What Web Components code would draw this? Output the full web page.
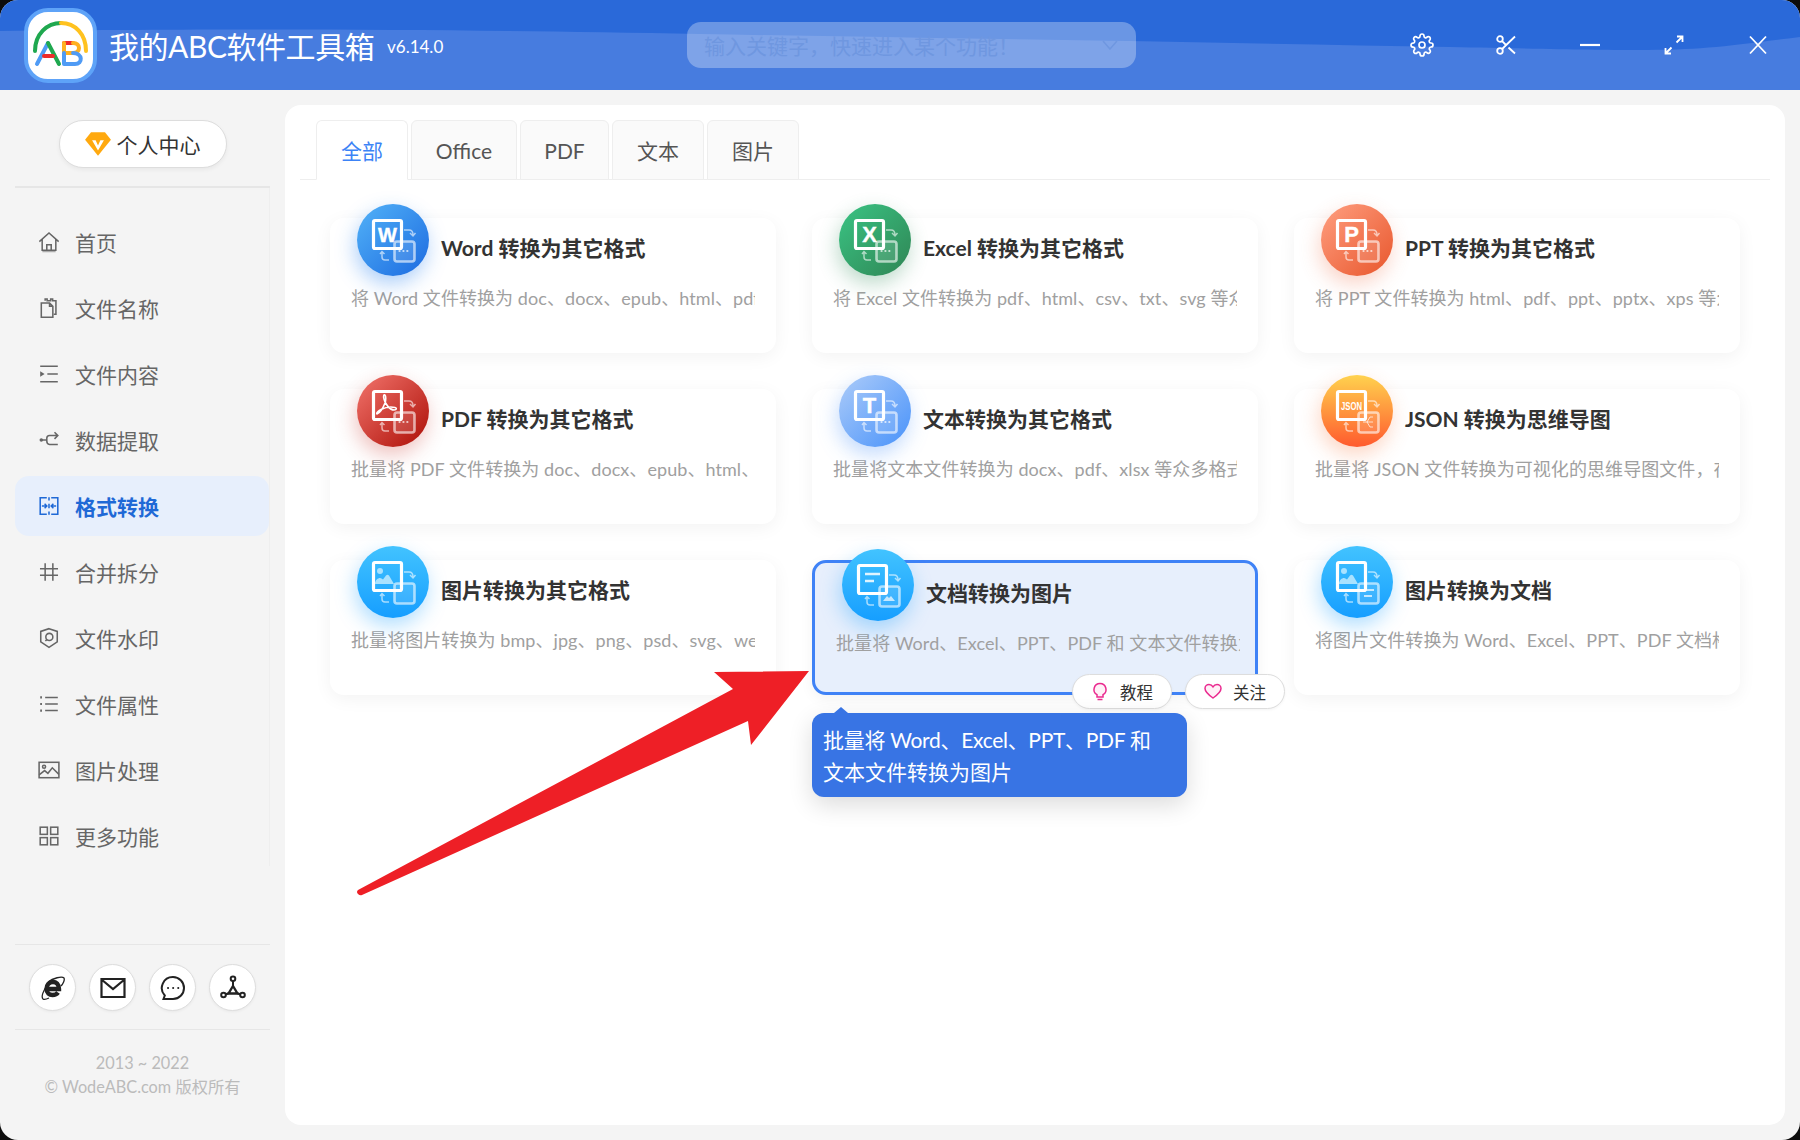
<!DOCTYPE html>
<html lang="zh">
<head>
<meta charset="utf-8">
<title>我的ABC软件工具箱</title>
<style>
  html, body { margin: 0; padding: 0; background: #0c0c0c; }
  body { font-family: Lato, "Noto Sans CJK SC", sans-serif; width: 1800px; height: 1140px; overflow: hidden; }
</style>
</head>
<body>

<abc-app>
  <app-header slot="header"></app-header>
  <side-bar slot="side">
    <nav-item icon="home">首页</nav-item>
    <nav-item icon="files">文件名称</nav-item>
    <nav-item icon="content">文件内容</nav-item>
    <nav-item icon="extract">数据提取</nav-item>
    <nav-item icon="format" active>格式转换</nav-item>
    <nav-item icon="hash">合并拆分</nav-item>
    <nav-item icon="shield">文件水印</nav-item>
    <nav-item icon="list">文件属性</nav-item>
    <nav-item icon="image">图片处理</nav-item>
    <nav-item icon="more">更多功能</nav-item>
  </side-bar>
  <main-panel slot="main">
    <tab-item slot="tabs" w="92" active>全部</tab-item>
    <tab-item slot="tabs" w="106">Office</tab-item>
    <tab-item slot="tabs" w="89">PDF</tab-item>
    <tab-item slot="tabs" w="92">文本</tab-item>
    <tab-item slot="tabs" w="92">图片</tab-item>

    <tool-card kind="word" from="#52b2f8" to="#1c6ae0" glow="rgba(40,130,240,.38)">
      <span slot="title">Word 转换为其它格式</span>
      <span slot="desc">将 Word 文件转换为 doc、docx、epub、html、pdf</span>
    </tool-card>
    <tool-card kind="excel" from="#3ac484" to="#2f8554" glow="rgba(50,140,90,.32)">
      <span slot="title">Excel 转换为其它格式</span>
      <span slot="desc">将 Excel 文件转换为 pdf、html、csv、txt、svg 等众</span>
    </tool-card>
    <tool-card kind="ppt" from="#ff9f80" to="#e8562c" glow="rgba(240,110,70,.3)">
      <span slot="title">PPT 转换为其它格式</span>
      <span slot="desc">将 PPT 文件转换为 html、pdf、ppt、pptx、xps 等众</span>
    </tool-card>
    <tool-card kind="pdf" from="#f2746c" to="#ac0e06" glow="rgba(200,50,40,.3)">
      <span slot="title">PDF 转换为其它格式</span>
      <span slot="desc">批量将 PDF 文件转换为 doc、docx、epub、html、</span>
    </tool-card>
    <tool-card kind="text" from="#adccf9" to="#4892fa" glow="rgba(80,150,250,.35)">
      <span slot="title">文本转换为其它格式</span>
      <span slot="desc">批量将文本文件转换为 docx、pdf、xlsx 等众多格式</span>
    </tool-card>
    <tool-card kind="json" from="#ffd24e" to="#ff5a2e" glow="rgba(250,120,60,.3)" down>
      <span slot="title">JSON 转换为思维导图</span>
      <span slot="desc">批量将 JSON 文件转换为可视化的思维导图文件，在</span>
    </tool-card>
    <tool-card kind="img" from="#42c3ff" to="#169eff" glow="rgba(30,160,255,.35)" down>
      <span slot="title">图片转换为其它格式</span>
      <span slot="desc">批量将图片转换为 bmp、jpg、png、psd、svg、webp</span>
    </tool-card>
    <tool-card kind="doc" from="#42c3ff" to="#169eff" glow="rgba(30,160,255,.35)" down selected>
      <span slot="title">文档转换为图片</span>
      <span slot="desc">批量将 Word、Excel、PPT、PDF 和 文本文件转换为</span>
      <pill-btn slot="actions" icon="bulb">教程</pill-btn>
      <pill-btn slot="actions" icon="heart">关注</pill-btn>
      <tip-box slot="tip"><span style="letter-spacing:-.3px">批量将 Word、Excel、PPT、PDF 和</span><br>文本文件转换为图片</tip-box>
    </tool-card>
    <tool-card kind="imgdoc" from="#42c3ff" to="#169eff" glow="rgba(30,160,255,.35)" down>
      <span slot="title">图片转换为文档</span>
      <span slot="desc">将图片文件转换为 Word、Excel、PPT、PDF 文档格</span>
    </tool-card>
  </main-panel>
</abc-app>

<script>
'use strict';

const NAV_ICONS = {
  home: '<path d="M1.2 9.6 10 1.8l8.8 7.8M3.8 7.8v9.7h12.4V7.8M8 17.5v-5h4v5"/><path d="M4 18.6h12" opacity=".5"/>',
  files: '<path d="M6.5 3.5V1.8h1.8v1.7h3.2V1.8h1.8v1.7h3v12.2h-2"/><path d="M3 5.5h7.5l3 3v10H3zM10.5 5.5v3h3"/>',
  content: '<path d="M2 3h16M8.5 10H18M2 17h16"/><path d="M2 7.6 6 10l-4 2.4z" fill="currentColor" stroke="none"/>',
  extract: '<circle cx="3" cy="10" r="1.6" fill="currentColor" stroke="none"/><path d="M3 10h5M8 10V8.500c0-1.500 1-2.500 2.500-2.500H18M15 3l3 3-3 3M8 10v1c0 1.800 1 3 2.500 3H18"/>',
  format: '<path d="M8 2.500H2v15h6M12 2.500h6v15h-6M10 2v3M10 8v4M10 15v3M3.500 10H8M6 8l2 2-2 2M16.500 10H12M14 8l-2 2 2 2"/>',
  hash: '<path d="M6.500 2v16M13.500 2v16M1.800 7h16.400M1.800 13h16.400"/>',
  shield: '<path d="M10 1.500 17.500 4v9.500L10 18.500l-7.500-5V4z"/><circle cx="10.300" cy="9" r="3.200"/><path d="M8 11.500l-1.300 1.300"/>',
  list: '<path d="M6.500 4H18M6.500 10H18M6.500 16H18"/><path d="M2 4h1.600M2 10h1.600M2 16h1.600" stroke-width="2"/>',
  image: '<rect x="1" y="3" width="18" height="14"/><circle cx="5.500" cy="7" r="1.400"/><path d="M1 14.500l5-4 3 2.500 4-5 6 6"/>',
  more: '<rect x="2" y="2" width="6.500" height="6.500"/><rect x="11.500" y="2" width="6.500" height="6.500"/><rect x="2" y="11.500" width="6.500" height="6.500"/><rect x="11.500" y="11.500" width="6.500" height="6.500"/>'
};

const GEAR = 'M19.4 15a1.65 1.65 0 0 0 .33 1.82l.06.06a2 2 0 0 1 0 2.83 2 2 0 0 1-2.83 0l-.06-.06a1.65 1.65 0 0 0-1.82-.33 1.65 1.65 0 0 0-1 1.51V21a2 2 0 0 1-2 2 2 2 0 0 1-2-2v-.09A1.65 1.65 0 0 0 9 19.4a1.65 1.65 0 0 0-1.82.33l-.06.06a2 2 0 0 1-2.83 0 2 2 0 0 1 0-2.83l.06-.06a1.65 1.65 0 0 0 .33-1.82 1.65 1.65 0 0 0-1.51-1H3a2 2 0 0 1-2-2 2 2 0 0 1 2-2h.09A1.65 1.65 0 0 0 4.6 9a1.65 1.65 0 0 0-.33-1.82l-.06-.06a2 2 0 0 1 0-2.83 2 2 0 0 1 2.83 0l.06.06a1.65 1.65 0 0 0 1.82.33H9a1.65 1.65 0 0 0 1-1.51V3a2 2 0 0 1 2-2 2 2 0 0 1 2 2v.09a1.65 1.65 0 0 0 1 1.51 1.65 1.65 0 0 0 1.82-.33l.06-.06a2 2 0 0 1 2.83 0 2 2 0 0 1 0 2.83l-.06.06a1.65 1.65 0 0 0-.33 1.82V9a1.65 1.65 0 0 0 1.51 1H21a2 2 0 0 1 2 2 2 2 0 0 1-2 2h-.09a1.65 1.65 0 0 0-1.51 1z';

class AbcApp extends HTMLElement {
  constructor() {
    super();
    this.attachShadow({ mode: 'open' }).innerHTML = `
      <style>
        :host { display: grid; grid-template-columns: 285px 1fr; grid-template-rows: 90px 1fr; width: 1800px; height: 1140px;
          background: #f4f4f4; border-radius: 18px; overflow: hidden; position: relative; }
        ::slotted([slot=header]) { grid-column: 1 / 3; }
        svg { position: absolute; left: 0; top: 0; z-index: 20; pointer-events: none; }
      </style>
      <slot name="header"></slot>
      <slot name="side"></slot>
      <slot name="main"></slot>
      <svg width="1800" height="1140"><path fill="#ee1f26" d="M809 671 714 672 733 689 358 890Q356 892 358 894 360 896 362 895L748 721 751 745z"/></svg>`;
  }
}

class AppHeader extends HTMLElement {
  constructor() {
    super();
    this.attachShadow({ mode: 'open' }).innerHTML = `
      <style>
        :host { display: flex; align-items: center; height: 90px; background: #2a69d9; position: relative; color: #fff; }
        .wave { position: absolute; inset: 0; }
        .logo { position: relative; width: 73px; height: 75px; margin-left: 24px; box-sizing: border-box; background: #fff;
          border: 4px solid #5ea3f8; border-radius: 24px; flex: none; }
        .logo svg { position: absolute; left: -5px; top: -4px; }
        .name { position: relative; font-size: 30px; letter-spacing: -.45px; margin-left: 12px; width: 278px; white-space: nowrap; }
        .ver { position: relative; font-size: 17px; width: 300px; padding-top: 3px; }
        .search { position: relative; box-sizing: border-box; width: 449px; height: 46px; background: rgba(255,255,255,.3); border-radius: 14px;
          display: flex; align-items: center; justify-content: space-between; padding: 0 18px 0 17px; color: #6f97e0; font-size: 21px; }
        .search svg { flex: none; }
        .btns { position: relative; margin-left: auto; display: flex; gap: 60px; padding-right: 30px; }
        .btns svg { display: block; }
      </style>
      <svg class="wave" width="1800" height="90"><path fill="#477cdf" d="M0 31C300 28 480 30 700 34S1200 42 1450 47 1680 52 1800 37V90H0z"/></svg>
      <div class="logo">
        <svg width="75" height="75" fill="none" stroke-width="4" stroke-linecap="round" stroke-linejoin="round">
          <path stroke="#1fa84f" d="M12 43C12 26 24 15 38 15"/>
          <path stroke="#ffc21f" d="M38 15C52 15 63 26 63 43"/>
          <path stroke="#4f9bf5" d="M14 56 25 35"/>
          <path stroke="#1fa84f" d="M25 35 36 56"/>
          <path stroke="#ee2b2b" d="M21 48H30"/>
          <path stroke="#ee2b2b" d="M41 35H50"/>
          <path stroke="#ffb01f" d="M50 35C58 35 58 45 50 45H41V35"/>
          <path stroke="#4f9bf5" d="M41 45V56H52C60 56 60 45 50 45"/>
        </svg>
      </div>
      <div class="name">我的ABC软件工具箱</div>
      <div class="ver">v6.14.0</div>
      <div class="search"><span>输入关键字，快速进入某个功能！</span>
        <svg width="16" height="10" fill="none" stroke="#6f97e0" stroke-width="1.500"><path d="M1 1l7 8 7-8"/></svg></div>
      <div class="btns">
        <svg width="24" height="24" viewBox="0 0 24 24" fill="none" stroke="#fff" stroke-width="1.700"><path d="${GEAR}"/><circle cx="12" cy="12" r="3"/></svg>
        <svg width="24" height="24" viewBox="0 0 24 24" fill="none" stroke="#fff" stroke-width="1.800"><circle cx="6" cy="6" r="2.800"/><circle cx="6" cy="18" r="2.800"/><path d="M21 3.500 8.100 16M14.500 14.500 21 20.500M8.100 8.100 12 12"/></svg>
        <svg width="24" height="24" viewBox="0 0 24 24" fill="none" stroke="#fff" stroke-width="2.200"><path d="M2 12h20"/></svg>
        <svg width="24" height="24" viewBox="0 0 24 24" fill="none" stroke="#fff" stroke-width="1.800"><path d="M3.500 20.500l6-6M3.500 15v5.500H9M20.500 3.500l-6 6M15 3.500h5.500V9"/></svg>
        <svg width="24" height="24" viewBox="0 0 24 24" fill="none" stroke="#fff" stroke-width="1.800"><path d="M4 3.500 20 20.500M20 3.500 4 20.500"/></svg>
      </div>`;
  }
}

class SideBar extends HTMLElement {
  constructor() {
    super();
    this.attachShadow({ mode: 'open' }).innerHTML = `
      <style>
        :host { display: flex; flex-direction: column; height: 1050px; box-sizing: border-box; padding: 30px 0 0 15px; width: 285px; }
        .user { align-self: flex-start; margin-left: 44px; box-sizing: border-box; width: 168px; height: 48px; border-radius: 24px; background: #fff;
          border: 1px solid #ddd; box-shadow: 0 2px 4px rgba(0,0,0,.05); display: flex; align-items: center; justify-content: center; gap: 5px;
          font-size: 21px; color: #333; padding-right: 2px; }
        hr { border: 0; height: 1px; background: #e6e6e6; width: 255px; margin: 0; }
        hr.a { margin-top: 18px; height: 2px; }
        .nav { display: flex; flex-direction: column; gap: 6px; width: 254px; padding: 24px 0 0; border-right: 1px solid #eeeeee; height: 654px; margin-bottom: 78px; }
        .links { display: flex; gap: 13px; padding: 19px 0 18px 14px; }
        .links span { display: flex; align-items: center; justify-content: center; width: 47px; height: 47px; box-sizing: border-box; border-radius: 50%;
          background: #fff; border: 1px solid #ddd; box-shadow: 0 1px 3px rgba(0,0,0,.05); }
        .copy { text-align: center; color: #bbb; font-size: 16.300px; line-height: 24px; padding-top: 21px; width: 255px; }
      </style>
      <div class="user">
        <svg width="28" height="26" viewBox="0 0 26 24"><path fill="#ffa90f" d="M6.500 1h13L25 8 13 23 1 8z"/><path fill="#fff" d="M7.500 8.500h3.300L13 13.500l2.200-5h3.300L13 18z"/></svg>
        <span>个人中心</span>
      </div>
      <hr class="a">
      <div class="nav"><slot></slot></div>
      <hr>
      <div class="links">
        <span><svg width="26" height="26" viewBox="0 0 26 26" fill="none" stroke="#222"><path stroke-width="4.400" d="M7.500 14H19c0-5-3-7-6-7-4 0-6.500 3-6.500 7s3 6 6 6c2.500 0 4.500-1 5.500-2.500"/><path stroke-width="1.300" d="M8 7C13 3 22 1 24 3c1 2-1 6-3 8M6 12C3 17 1 22 3 24c1.500 1 4 0 6-1"/></svg></span>
        <span><svg width="26" height="22" viewBox="0 0 26 22" fill="none" stroke="#222" stroke-width="2.200"><path d="M1.500 2h23v18h-23zM1.500 2.500 13 12 24.500 2.500"/></svg></span>
        <span><svg width="26" height="26" viewBox="0 0 26 26" fill="none" stroke="#222" stroke-width="2"><path d="M13 2a11 11 0 1 1 0 22H3.500l1.300-3.500A11 11 0 0 1 13 2z"/><path stroke-width="2" stroke-linecap="round" stroke-dasharray=".1 5" d="M8 13h11"/></svg></span>
        <span><svg width="26" height="26" viewBox="0 0 26 26" fill="none" stroke="#222" stroke-width="2"><circle cx="13" cy="3.800" r="2.300"/><circle cx="3.500" cy="20" r="2.300"/><circle cx="22.500" cy="20" r="2.300"/><path d="M13 6v5M5.500 19.500 9 18M20.500 19.500 17 18"/><path stroke-width="2.400" d="M13 11l4.500 7.500h-9z"/></svg></span>
      </div>
      <hr>
      <div class="copy">2013 ~ 2022<br>© WodeABC.com 版权所有</div>`;
  }
}

class NavItem extends HTMLElement {
  constructor() {
    super();
    this.attachShadow({ mode: 'open' });
  }
  connectedCallback() {
    this.shadowRoot.innerHTML = `
      <style>
        :host { display: flex; align-items: center; gap: 15px; height: 60px; padding-left: 23px; border-radius: 14px; font-size: 21px; color: #666; }
        :host([active]) { background: #e7effc; color: #1f69d6; font-weight: 700; }
        svg { display: block; flex: none; }
      </style>
      <svg width="22" height="22" viewBox="0 0 20 20" fill="none" stroke="currentColor" stroke-width="1.400">${NAV_ICONS[this.getAttribute('icon')]}</svg>
      <slot></slot>`;
  }
}

class MainPanel extends HTMLElement {
  constructor() {
    super();
    this.attachShadow({ mode: 'open' }).innerHTML = `
      <style>
        :host { display: block; margin: 15px 15px 15px 0; background: #fff; border-radius: 16px; position: relative; }
        .tabs { display: flex; gap: 3px; margin: 15px 15px 0; padding-left: 16px; height: 59px; border-bottom: 1px solid #eee; }
        .grid { display: grid; grid-template-columns: repeat(3, 446px); grid-auto-rows: 135px; gap: 36px; padding: 38px 0 0 45px; }
      </style>
      <div class="tabs"><slot name="tabs"></slot></div>
      <div class="grid"><slot></slot></div>`;
  }
}

class TabItem extends HTMLElement {
  constructor() {
    super();
    this.attachShadow({ mode: 'open' });
  }
  connectedCallback() {
    this.shadowRoot.innerHTML = `
      <style>
        :host { display: flex; align-items: center; justify-content: center; box-sizing: border-box; width: ${this.getAttribute('w')}px; height: 60px;
          background: #fafafa; border: 1px solid #eee; border-bottom: 1px solid #eee; border-radius: 6px 6px 0 0; font-size: 21px; color: #555; }
        :host([active]) { background: #fff; border-bottom-color: #fff; color: #3c83f6; }
      </style>
      <slot></slot>`;
  }
}

class ToolCard extends HTMLElement {
  constructor() {
    super();
    this.attachShadow({ mode: 'open' });
  }
  connectedCallback() {
    const from = this.getAttribute('from');
    const to = this.getAttribute('to');
    const deg = this.hasAttribute('down') ? 180 : 135;
    this.shadowRoot.innerHTML = `
      <style>
        :host { display: block; box-sizing: border-box; height: 135px; position: relative; background: #fff; border-radius: 14px;
          box-shadow: 0 4px 18px rgba(0,0,0,.05); }
        :host([selected]) { background: #e7effc; border: 3px solid #3f82f6; z-index: 5; box-shadow: 0 4px 14px rgba(0,0,0,.05); }
        .ico { position: absolute; left: 27px; top: -14px; width: 72px; height: 72px; border-radius: 50%;
          background: linear-gradient(${deg}deg, ${from}, ${to}); box-shadow: -2px 8px 20px ${this.getAttribute('glow')}; }
        .ico svg { display: block; }
        .title { padding: 15px 0 0 111px; font-size: 21px; font-weight: 700; line-height: 30px; color: #333; white-space: nowrap; }
        .desc { margin: 21px 0 0 21px; width: 404px; font-size: 18px; letter-spacing: .07px; line-height: 28px; color: #a0a0a0; white-space: nowrap; overflow: hidden; }
        .actions { position: absolute; right: -30px; bottom: -17px; display: flex; gap: 13px; }
        .tip { position: absolute; left: -3px; top: 150px; }
      </style>
      <div class="ico">${this.glyph()}</div>
      <div class="title"><slot name="title"></slot></div>
      <div class="desc"><slot name="desc"></slot></div>
      <div class="actions"><slot name="actions"></slot></div>
      <div class="tip"><slot name="tip"></slot></div>`;
  }
  glyph() {
    const kind = this.getAttribute('kind');
    const soft = 'rgba(255,255,255,.6)';
    const letter = (t, s) => `<text x="30.500" y="38" text-anchor="middle" font-family="Liberation Sans, sans-serif" font-weight="700" font-size="${s}" fill="#fff" stroke="#fff" stroke-width=".4">${t}</text>`;
    const mountain = (dx, dy, s) => `<g transform="translate(${dx} ${dy}) scale(${s})"><circle cx="-7" cy="-6" r="3" fill="#a9e2ff"/><path fill="#a9e2ff" d="M-12 7c0-4 3-6 5-6 1 0 2 .5 3 1.500l3-4c1-1 2-1 3 0l5 8.500z"/></g>`;
    let front = '';
    let back = `<path stroke="#fff" stroke-opacity=".7" stroke-width="2.200" stroke-linecap="round" stroke-dasharray=".1 3.800" d="M42.500 47h11" fill="none"/>`;
    if (kind == 'word') front = letter('W', 20);
    if (kind == 'excel') front = letter('X', 22);
    if (kind == 'ppt') front = letter('P', 22);
    if (kind == 'text') front = letter('T', 22);
    if (kind == 'pdf') front = `<path fill="none" stroke="#fff" stroke-width="1.600" d="M20 39c3-1 6-6 8-11 1-3 1-7 0-8-1-1-2 1-1 4 1 5 6 11 10 11 3 0 3-2 1-2.500-4-1-10 0-14 2-3 1.500-5 4-4 4.500z"/>`;
    if (kind == 'json') {
      front = `<text x="30.500" y="35" text-anchor="middle" font-family="Liberation Sans Narrow, Liberation Sans, sans-serif" font-weight="700" font-size="10.500" fill="#fff" textLength="21" lengthAdjust="spacingAndGlyphs">JSON</text>`;
      back = `<path fill="none" stroke="#fff" stroke-opacity=".7" stroke-width="1" d="M42 47h4M46 47l3-5h3M46 47h6M46 47l3 5h3"/>`;
    }
    if (kind == 'img') { front = mountain(30, 31, 1); back = ''; }
    if (kind == 'imgdoc') {
      front = mountain(30, 31, 1);
      back = `<path fill="none" stroke="#fff" stroke-opacity=".7" stroke-width="2" d="M41 44h12M43 50h8"/>`;
    }
    if (kind == 'doc') {
      front = `<path fill="none" stroke="#dff4ff" stroke-width="2.600" d="M23 25h15M23 32h9"/>`;
      back = `<path fill="#fff" fill-opacity=".7" d="M41 52l4-5 2 2 2-2 4 5z"/>`;
    }
    return `<svg width="72" height="72" viewBox="0 0 72 72" fill="none">
      <rect x="37.500" y="37.500" width="20" height="20" rx="2.500" fill="rgba(255,255,255,.12)" stroke="${soft}" stroke-width="2.600"/>
      ${back}
      <path stroke="${soft}" stroke-width="1.500" d="M47 26h5c3 0 4 2 4 5M53 29l3 3 2.500-3M25 48v5c0 2 1 3 3 3h4M23 50l2-2.500 2.500 2.500"/>
      <rect x="16.500" y="16.500" width="28" height="28" rx="1.500" stroke="#fff" stroke-width="3.200"/>
      ${front}
    </svg>`;
  }
}

class PillBtn extends HTMLElement {
  constructor() {
    super();
    this.attachShadow({ mode: 'open' });
  }
  connectedCallback() {
    const icons = {
      bulb: '<path d="M9 1.500a6 6 0 0 0-3 11.200V15h6v-2.300A6 6 0 0 0 9 1.500z" fill="#fff0f7"/><path d="M6.500 17.500h5"/>',
      heart: '<path d="M9 16C4 12.500 1 10 1 6.500 1 4 3 2.500 5 2.500c1.800 0 3.200 1 4 2.300.8-1.300 2.200-2.300 4-2.300 2 0 4 1.500 4 4 0 3.500-3 6-8 9.500z" fill="#fff0f7"/>'
    };
    this.shadowRoot.innerHTML = `
      <style>
        :host { display: flex; align-items: center; justify-content: center; gap: 11px; box-sizing: border-box; width: 100px; height: 35px;
          background: #fff; border: 1px solid #ddd; border-radius: 18px; font-size: 16.500px; color: #333; box-shadow: 0 1px 3px rgba(0,0,0,.05); }
        svg { display: block; }
      </style>
      <svg width="18" height="19" viewBox="0 0 18 19" fill="none" stroke="#ea2a8f" stroke-width="1.500">${icons[this.getAttribute('icon')]}</svg>
      <slot></slot>`;
  }
}

class TipBox extends HTMLElement {
  constructor() {
    super();
    this.attachShadow({ mode: 'open' }).innerHTML = `
      <style>
        :host { display: block; position: relative; box-sizing: border-box; width: 375px; height: 84px; padding: 11px 11px; background: #3874e4; color: #fff;
          border-radius: 12px; font-size: 21px; line-height: 32px; box-shadow: 0 8px 24px rgba(0,0,0,.14); white-space: nowrap; }
        .arrow { position: absolute; left: 22px; top: -6px; width: 0; height: 0; border: 7px solid transparent; border-top: 0; border-bottom: 6px solid #3874e4; }
      </style>
      <div class="arrow"></div>
      <slot></slot>`;
  }
}

customElements.define('abc-app', AbcApp);
customElements.define('app-header', AppHeader);
customElements.define('side-bar', SideBar);
customElements.define('nav-item', NavItem);
customElements.define('main-panel', MainPanel);
customElements.define('tab-item', TabItem);
customElements.define('tool-card', ToolCard);
customElements.define('pill-btn', PillBtn);
customElements.define('tip-box', TipBox);
</script>
</body>
</html>
